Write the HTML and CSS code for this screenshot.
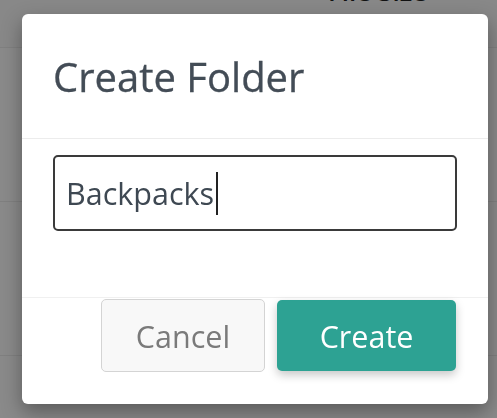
FILE: index.html
```html
<!DOCTYPE html>
<html lang="en">
<head>
<meta charset="utf-8">
<title>Create Folder</title>
<link rel="stylesheet" href="styles.css">
</head>
<body>
<div class="page">
  <div class="page-head"><span class="col-label">File Size</span></div>
  <div class="page-row"></div>
  <div class="page-row"></div>
  <div class="page-row page-row-last"></div>
</div>
<div class="backdrop"></div>
<div class="modal" role="dialog" aria-labelledby="modal-title">
  <div class="modal-header">
    <h2 class="modal-title" id="modal-title">Create Folder</h2>
  </div>
  <div class="modal-body">
    <div class="text-input" role="textbox">Backpacks<span class="caret"></span></div>
  </div>
  <div class="modal-footer">
    <button class="btn btn-cancel" type="button">Cancel</button>
    <button class="btn btn-create" type="button">Create</button>
  </div>
</div>
</body>
</html>
```

FILE: styles.css
```css
html, body {
  margin: 0;
  padding: 0;
}
body {
  width: 497px;
  height: 418px;
  overflow: hidden;
  background: #ffffff;
  font-family: "Open Sans", "Noto Sans", sans-serif;
  position: relative;
}
.page {
  display: flex;
  flex-direction: column;
}
.page-head {
  height: 47px;
  border-bottom: 1px solid #ececec;
  background: #fbfbfb;
  padding-left: 328px;
  overflow: hidden;
}
.col-label {
  display: block;
  margin-top: -24px;
  font-size: 26px;
  font-weight: 600;
  color: #222;
  line-height: 30px;
}
.page-row {
  height: 153px;
  border-bottom: 1px solid #ececec;
}
.page-row-last {
  height: 62px;
  border-bottom: none;
}
.backdrop {
  position: fixed;
  inset: 0;
  background: rgba(0, 0, 0, 0.46);
}
.modal {
  position: absolute;
  left: 22px;
  top: 14px;
  width: 466px;
  height: 390px;
  background: #fff;
  border-radius: 6px;
  box-shadow: 0 8px 20px rgba(0, 0, 0, 0.35);
  display: flex;
  flex-direction: column;
  box-sizing: border-box;
}
.modal-header {
  padding: 39px 31px 37px;
  border-bottom: 1px solid #ececec;
}
.modal-title {
  margin: 0;
  font-size: 40px;
  line-height: 48px;
  font-weight: 400;
  color: #434c56;
  -webkit-text-stroke: 0.3px #434c56;
}
.modal-body {
  padding: 16px 31px 66px;
}
.text-input {
  box-sizing: border-box;
  height: 76px;
  border: 2px solid #3a3a3a;
  border-radius: 5px;
  padding: 0 11px;
  display: flex;
  align-items: center;
  font-size: 30.5px;
  color: #3e4852;
}
.caret {
  display: inline-block;
  width: 2px;
  height: 43px;
  margin-left: 2px;
  background: #222;
}
.modal-footer {
  border-top: 1px solid #f0f0f0;
  padding: 0 32px 0 0;
  display: flex;
  justify-content: flex-end;
  align-items: center;
  gap: 12px;
  height: 75px;
}
.btn {
  font-family: inherit;
  font-size: 30.5px;
  border-radius: 5px;
  cursor: pointer;
  padding: 0;
}
.btn-cancel {
  width: 164px;
  height: 73px;
  background: #f8f8f8;
  border: 1.5px solid #d4d4d4;
  color: #7a7a7a;
}
.btn-create {
  width: 179px;
  height: 71px;
  background: #2da293;
  border: none;
  color: #fff;
  box-shadow: 0 4px 10px rgba(0, 0, 0, 0.22);
}
```
